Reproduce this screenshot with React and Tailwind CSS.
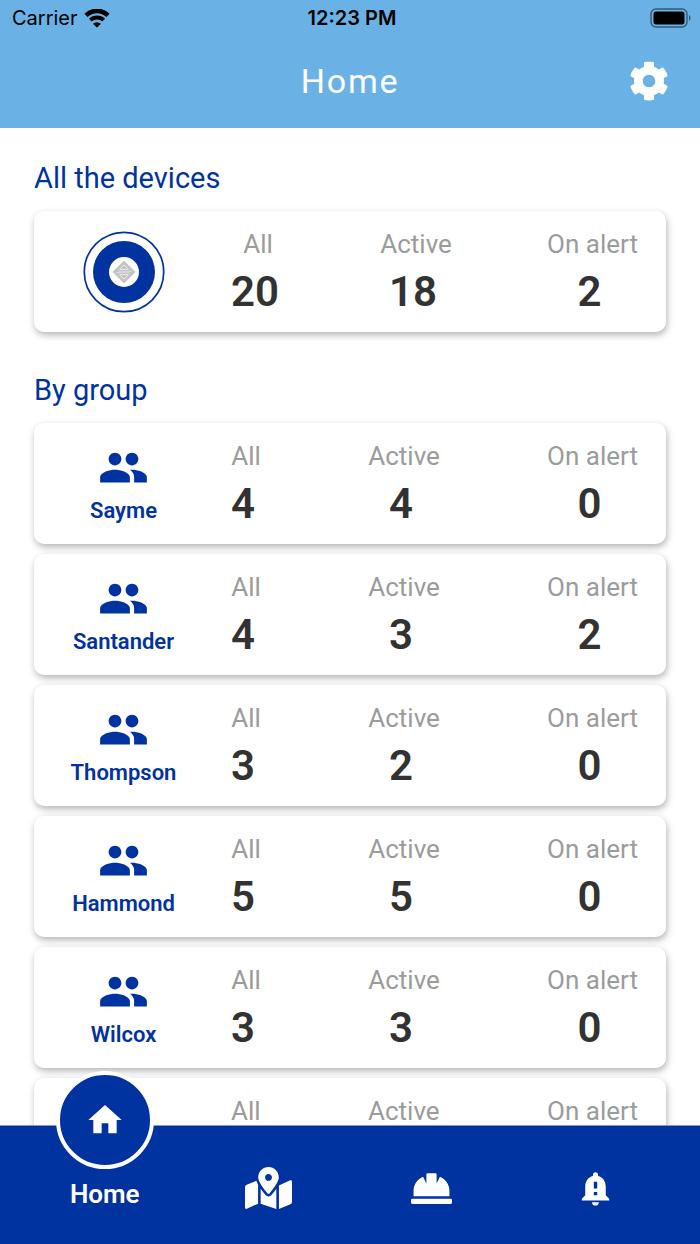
import React, { useState } from 'react';
import { FaCog, FaMapMarkedAlt, FaHardHat } from 'react-icons/fa';
import { MdHome, MdNotificationImportant, MdPeople } from 'react-icons/md';

const groups = [
  { id: 1, name: 'Sayme', all: 4, active: 4, onAlert: 0 },
  { id: 2, name: 'Santander', all: 4, active: 3, onAlert: 2 },
  { id: 3, name: 'Thompson', all: 3, active: 2, onAlert: 0 },
  { id: 4, name: 'Hammond', all: 5, active: 5, onAlert: 0 },
  { id: 5, name: 'Wilcox', all: 3, active: 3, onAlert: 0 },
  { id: 6, name: '', all: '', active: '', onAlert: '' },
];

const tabs = [
  { id: 'home', label: 'Home', icon: <MdHome className="size-10" /> },
  { id: 'map', label: 'Map', icon: <FaMapMarkedAlt className="h-[42px] w-[47px]" /> },
  { id: 'workers', label: 'Workers', icon: <FaHardHat className="size-[41px]" /> },
  { id: 'alerts', label: 'Alerts', icon: <MdNotificationImportant className="size-[41px]" /> },
];

const StatusBar = () => (
  <div className="grid h-9 grid-cols-3 items-center pl-3 pr-2 font-['Inter',sans-serif] text-[20px] leading-6 text-black">
    <div className="flex items-center gap-1.5">
      <span>Carrier</span>
      <svg className="h-[19px] w-[26px]" viewBox="0 0 26 19" fill="none" aria-hidden="true">
        <path d="M2 6.300a15.800 15.800 0 0 1 22 0" stroke="currentColor" strokeWidth="4.600" />
        <path d="M6.300 11.200a9.600 9.600 0 0 1 13.400 0" stroke="currentColor" strokeWidth="3.800" />
        <path d="M13 18.600l-4-3.800a5.800 5.800 0 0 1 8 0z" fill="currentColor" />
      </svg>
    </div>
    <span className="text-center font-semibold">12:23 PM</span>
    <svg className="h-5 w-[42px] justify-self-end" viewBox="0 0 42 20" aria-hidden="true">
      <rect x="1" y="1" width="36" height="18" rx="5" fill="none" stroke="black" strokeOpacity="0.5" strokeWidth="1.4" />
      <rect x="3.5" y="3.5" width="31" height="13" rx="2.5" />
      <path d="M39 7c2 .8 2 5.200 0 6z" fillOpacity="0.5" />
    </svg>
  </div>
);

const DeviceLogo = () => (
  <svg className="size-[82px]" viewBox="0 0 82 82" fill="none" aria-hidden="true">
    <circle cx="41" cy="41" r="39.7" stroke="#0032A0" strokeWidth="1.7" />
    <circle cx="41" cy="41" r="31" fill="#0032A0" />
    <circle cx="41" cy="41" r="15" fill="white" />
    <path d="M41 29.500L52.500 41 41 52.500 29.500 41z" fill="#C4C4C4" />
    <path d="M45 37.500L41 34l-4.500 4.500h9M34 41.800l2-.8h10l2-.8M37 44.500L41 48l4.500-4.500h-9" stroke="#F2F2F2" strokeWidth="0.8" />
  </svg>
);

const Stat = ({ label, value }) => (
  <div className="flex flex-col items-center gap-2">
    <dt className="text-[26px] leading-8 text-[#9B9B9B]">{label}</dt>
    <dd className="h-12 min-w-6 pr-1.5 text-[42px] font-semibold leading-12 text-[#323232]">{value}</dd>
  </div>
);

const StatsCard = ({ all, active, onAlert, children }) => (
  <div className="flex min-h-[121px] items-center rounded-[10px] bg-white shadow-[1px_3px_7px_rgba(0,0,0,0.3)]">
    <div className="flex w-[179px] shrink-0 flex-col items-center text-[#0032A0]">{children}</div>
    <dl className="flex flex-1 justify-between pl-[18px] pr-7">
      <Stat label="All" value={all} />
      <Stat label="Active" value={active} />
      <Stat label="On alert" value={onAlert} />
    </dl>
  </div>
);

const App = () => {
  const [activeTab, setActiveTab] = useState('home');

  return (
    <div className="flex h-screen flex-col bg-white font-['Roboto',sans-serif]">
      <header className="shrink-0 bg-[#6AB2E6]">
        <StatusBar />
        <div className="grid h-[92px] grid-cols-[1fr_auto_1fr] items-center px-[31px] pb-0.5">
          <h1 className="col-start-2 text-[34px] leading-10 tracking-wider text-white">Home</h1>
          <button type="button" aria-label="Settings" className="justify-self-end text-white">
            <FaCog className="size-10" />
          </button>
        </div>
      </header>

      <main className="min-h-0 flex-1 overflow-y-auto px-[34px] pb-16 pt-8 [scrollbar-width:none]">
        <section>
          <h2 className="mb-[15px] text-[29px] leading-9 text-[#0032A0]">All the devices</h2>
          <StatsCard all={20} active={18} onAlert={2}>
            <DeviceLogo />
          </StatsCard>
        </section>

        <section className="mt-10">
          <h2 className="mb-[15px] text-[29px] leading-9 text-[#0032A0]">By group</h2>
          <div className="flex flex-col gap-2.5">
            {groups.map((group) => (
              <StatsCard key={group.id} all={group.all} active={group.active} onAlert={group.onAlert}>
                <MdPeople className="size-[51px]" />
                <span className="mt-1 h-7 text-[22px] font-semibold leading-7">{group.name}</span>
              </StatsCard>
            ))}
          </div>
        </section>
      </main>

      {/* Bottom tabs */}
      <nav className="grid h-[119px] shrink-0 grid-cols-4 border-t border-[#7F98CF] bg-[#0032A0] px-[23px] text-white">
        {tabs.map((tab) => (
          <button
            key={tab.id}
            type="button"
            aria-label={tab.label}
            onClick={() => setActiveTab(tab.id)}
            className="relative flex flex-col items-center pt-[42px]"
          >
            {activeTab === tab.id ? (
              <>
                <span className="absolute -top-[55px] flex size-[98px] items-center justify-center rounded-full border-4 border-white bg-[#0032A0]">
                  {tab.icon}
                </span>
                <span className="mt-3 text-[26px] font-semibold leading-7">{tab.label}</span>
              </>
            ) : (
              <span className="flex h-10 items-center">{tab.icon}</span>
            )}
          </button>
        ))}
      </nav>
    </div>
  );
};

export default App;
